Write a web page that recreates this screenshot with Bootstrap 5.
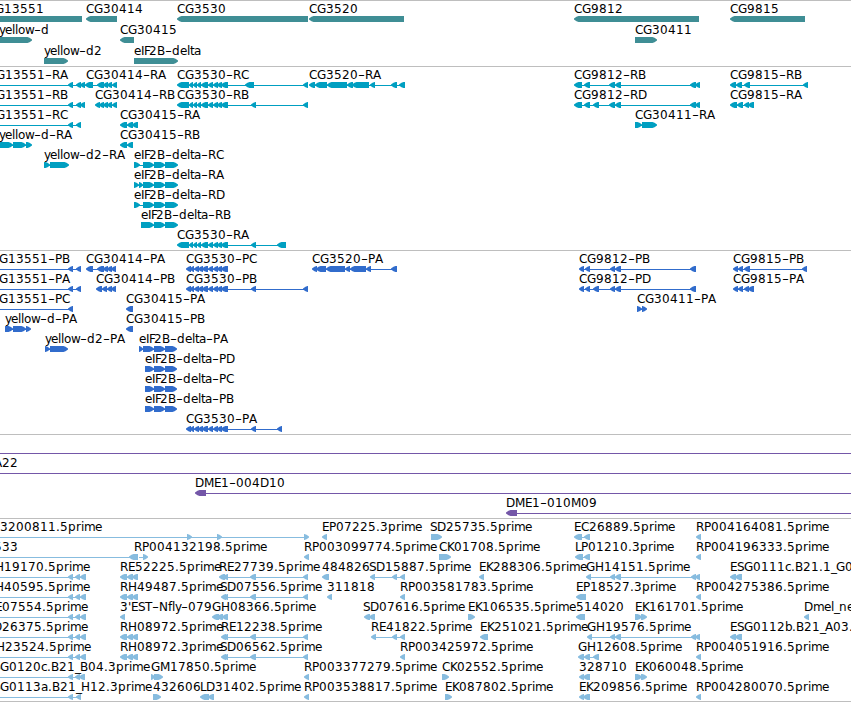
<!DOCTYPE html>
<html lang="en">
<head>
    <meta charset="UTF-8">
    <meta name="viewport" content="width=device-width, initial-scale=1.0">
    <title>Genome browser</title>
    <link href="https://cdn.jsdelivr.net/npm/bootstrap@5.3.0/dist/css/bootstrap.min.css" rel="stylesheet">
    <style>
        .browser {
            width: 851px;
            height: 702px;
            background-color: #fff;
        }

        .track {
            border-top: 1px solid #bebebe;
        }

        .track:last-child {
            border-bottom: 1px solid #bebebe;
        }

        .track text {
            font: 12px "DejaVu Sans", sans-serif;
            fill: #000;
        }

        .genes { color: #3f8e95; height: 66px; }
        .transcripts { color: #009fc1; height: 184px; }
        .proteins { color: #316ccc; height: 184px; }
        .clones { color: #7457a8; height: 84px; }
        .ests { color: #87bcdf; height: 184px; }
    </style>
</head>
<body>
    <main class="browser d-flex flex-column overflow-hidden">
        <section class="track genes flex-shrink-0" data-track="genes" data-pitch="21"></section>
        <section class="track transcripts flex-shrink-0" data-track="transcripts" data-pitch="20"></section>
        <section class="track proteins flex-shrink-0" data-track="proteins" data-pitch="20"></section>
        <section class="track clones flex-shrink-0" data-track="clones" data-pitch="20"></section>
        <section class="track ests flex-shrink-0" data-track="ests" data-pitch="20"></section>
    </main>

    <script src="https://cdn.jsdelivr.net/npm/bootstrap@5.3.0/dist/js/bootstrap.bundle.min.js"></script>
    <script>
        const cg3530 = '189:193 193:197 197:201 201:208 208:213 213:218 217:222 221:228';
        const cg3530p = '186:191 190:194 194:199 198:203 202:208 208:213 213:218 217:222 221:228';
        const eif = '143:154 154:165 165:178';
        const eifp = '145:154 154:165 165:177';

        // row, label, label x, strand, exons as "start:end"
        const tracks = {
            genes: [
                [0, 'CG13551', -13, '-', '-20:82'],
                [0, 'CG30414', 86, '-', '86:117'],
                [0, 'CG3530', 177, '-', '177:308'],
                [0, 'CG3520', 309, '-', '309:404'],
                [0, 'CG9812', 574, '-', '574:699'],
                [0, 'CG9815', 730, '-', '730:805'],
                [1, 'yellow-d', -1, '+', '-20:32'],
                [1, 'CG30415', 120, '-', '120:134'],
                [1, 'CG30411', 635, '+', '635:657'],
                [2, 'yellow-d2', 44, '+', '44:68'],
                [2, 'eIF2B-delta', 134, '+', '134:178']
            ],
            transcripts: [
                [0, 'CG13551-RA', -12, '-', '-20:-15 68:73 76:81 80:85 85:93'],
                [0, 'CG30414-RA', 86, '-', '86:93 97:104 103:108 107:112 112:117'],
                [0, 'CG3530-RC', 177, '-', '177:189 ' + cg3530 + ' 245:254 303:308'],
                [0, 'CG3520-RA', 309, '-', '309:315 315:327 327:347 347:353 352:369 370:375 391:397 399:405'],
                [0, 'CG9812-RB', 574, '-', '574:582 584:590 609:615 615:621 690:696 695:700'],
                [0, 'CG9815-RB', 730, '-', '730:736 736:742 744:750 803:808'],
                [1, 'CG13551-RB', -12, '-', '-20:-15 68:73 76:81 80:85'],
                [1, 'CG30414-RB', 95, '-', '95:100 99:104 103:108 107:112 112:117'],
                [1, 'CG3530-RB', 177, '-', '177:189 ' + cg3530 + ' 251:256 303:308'],
                [1, 'CG9812-RD', 574, '-', '574:582 584:590 593:599 609:615 615:621 690:696 695:700'],
                [1, 'CG9815-RA', 730, '-', '730:737 737:743 744:749 748:754'],
                [2, 'CG13551-RC', -12, '-', '-20:-15 68:73 76:81'],
                [2, 'CG30415-RA', 120, '-', '120:127 127:133 132:138'],
                [2, 'CG30411-RA', 635, '+', '635:642 642:657'],
                [3, 'yellow-d-RA', -1, '+', '-20:13 13:26 26:32'],
                [3, 'CG30415-RB', 120, '-', '120:127 127:133'],
                [4, 'yellow-d2-RA', 44, '+', '44:50 50:69'],
                [4, 'eIF2B-delta-RC', 134, '+', '134:140 ' + eif],
                [5, 'eIF2B-delta-RA', 134, '+', '134:139 139:143 ' + eif],
                [6, 'eIF2B-delta-RD', 134, '+', '134:140 ' + eif],
                [7, 'eIF2B-delta-RB', 141, '+', '141:154 154:165 165:178'],
                [8, 'CG3530-RA', 177, '-', '177:189 ' + cg3530 + ' 251:256 277:286']
            ],
            proteins: [
                [0, 'CG13551-PB', -9, '-', '-20:-15 68:73 76:81'],
                [0, 'CG30414-PA', 86, '-', '86:93 97:104 103:108 107:112 111:116'],
                [0, 'CG3530-PC', 186, '-', cg3530p],
                [0, 'CG3520-PA', 312, '-', '312:317 316:326 326:345 345:350 350:366 366:371 391:397'],
                [0, 'CG9812-PB', 579, '-', '579:584 585:590 610:615 615:621 690:696'],
                [0, 'CG9815-PB', 733, '-', '733:738 738:743 744:750 802:807'],
                [1, 'CG13551-PA', -9, '-', '-20:-15 68:73 76:81'],
                [1, 'CG30414-PB', 96, '-', '96:102 102:107 107:112 111:116'],
                [1, 'CG3530-PB', 186, '-', cg3530p + ' 251:256 303:308'],
                [1, 'CG9812-PD', 579, '-', '579:584 585:590 593:599 610:615 615:621 690:696'],
                [1, 'CG9815-PA', 733, '-', '733:738 738:743 744:749 748:754'],
                [2, 'CG13551-PC', -9, '-', '-20:-15 68:73'],
                [2, 'CG30415-PA', 126, '-', '126:133'],
                [2, 'CG30411-PA', 637, '+', '637:642 642:647'],
                [3, 'yellow-d-PA', 5, '+', '5:13 13:26 26:31'],
                [3, 'CG30415-PB', 126, '-', '126:133'],
                [4, 'yellow-d2-PA', 45, '+', '45:50 50:68'],
                [4, 'eIF2B-delta-PA', 139, '+', '139:143 143:154 154:165 165:177'],
                [5, 'eIF2B-delta-PD', 145, '+', eifp],
                [6, 'eIF2B-delta-PC', 145, '+', eifp],
                [7, 'eIF2B-delta-PB', 145, '+', eifp],
                [8, 'CG3530-PA', 186, '-', cg3530p + ' 251:256 277:282']
            ],
            clones: [
                [0, '', 0, '-', '-20:-15 870:880'],
                [1, 'A22', -6, '-', '-20:-15 870:880'],
                [2, 'DME1-004D10', 195, '-', '195:206 870:880'],
                [3, 'DME1-010M09', 506, '-', '506:517 870:880']
            ],
            ests: [
                [0, '3200811.5prime', 0, '+', '-20:-15 187:192 217:222 304:309'],
                [0, 'EP07225.3prime', 322, '-', '322:327'],
                [0, 'SD25735.5prime', 430, '+', '431:442'],
                [0, 'EC26889.5prime', 574, '-', '574:582 584:590'],
                [0, 'RP004164081.5prime', 696, '-', '696:701'],
                [1, '533', -6, '-', '-20:-15 129:138'],
                [1, 'RP004132198.5prime', 134, '+', '137:138 143:148'],
                [1, 'RP003099774.5prime', 304, '-', '304:309'],
                [1, 'CK01708.5prime', 439, '+', '439:451'],
                [1, 'LP01210.3prime', 575, '-', '575:583 584:590'],
                [1, 'RP004196333.5prime', 696, '-', '696:701'],
                [2, 'H19170.5prime', -5, '-', '-20:-15 68:73 75:80 80:86'],
                [2, 'RE52225.5prime', 120, '-', '120:127 127:133 132:138'],
                [2, 'RE27739.5prime', 219, '-', '219:225 223:228 250:256 303:308'],
                [2, '484826', 322, '-', '322:329'],
                [2, 'SD15887.5prime', 369, '-', '370:375 392:397 400:405'],
                [2, 'EK288306.5prime', 479, '-', '479:484'],
                [2, 'GH14151.5prime', 586, '-', '586:591 610:615 615:621 691:696 695:700'],
                [2, 'ESG0111c.B21.1_G05.5prime', 730, '-', '730:736 735:742'],
                [3, 'H40595.5prime', -5, '-', '-20:-15 68:73 75:80 80:86'],
                [3, 'RH49487.5prime', 120, '-', '120:127 127:133 132:138'],
                [3, 'SD07556.5prime', 220, '-', '221:226 223:228 250:256 303:308'],
                [3, '311818', 327, '-', '327:332'],
                [3, 'RP003581783.5prime', 400, '-', '400:405'],
                [3, 'EP18527.3prime', 576, '-', '576:586'],
                [3, 'RP004275386.5prime', 696, '-', '696:701'],
                [4, 'E07554.5prime', -5, '-', '-20:-15 68:73 75:80 80:86'],
                [4, "3'EST-Nfly-079", 120, '-', '120:125'],
                [4, 'GH08366.5prime', 212, '-', '212:219 217:223 222:228'],
                [4, 'SD07616.5prime', 363, '-', '364:370 369:375'],
                [4, 'EK106535.5prime', 468, '+', '468:475'],
                [4, '514020', 576, '-', '576:585'],
                [4, 'EK161701.5prime', 635, '+', '635:642 641:647'],
                [4, 'Dmel_neo', 804, '-', '804:809'],
                [5, 'D26375.5prime', -7, '-', '-20:-15 68:73 75:80 80:86'],
                [5, 'RH08972.5prime', 120, '-', '120:127 127:133 132:138'],
                [5, 'RE12238.5prime', 221, '-', '221:226 223:228 250:256 303:308'],
                [5, 'RE41822.5prime', 371, '-', '371:376 392:397 400:405'],
                [5, 'EK251021.5prime', 480, '-', '480:488'],
                [5, 'GH19576.5prime', 587, '-', '587:592 610:615 615:621 691:696 695:700'],
                [5, 'ESG0112b.B21_A03.5prime', 730, '-', '730:736 735:742'],
                [6, 'H23524.5prime', -4, '-', '-20:-15 68:73 75:80 80:86'],
                [6, 'RH08972.3prime', 120, '-', '120:127 127:133 132:138'],
                [6, 'SD06562.5prime', 220, '-', '221:226 223:228 250:256 303:308'],
                [6, 'RP003425972.5prime', 400, '-', '400:405'],
                [6, 'GH12608.5prime', 578, '-', '578:584 584:590 593:599'],
                [6, 'RP004051916.5prime', 696, '-', '696:701'],
                [7, 'ESG0120c.B21_B04.3prime', -14, '-', '-20:-15 68:73 75:80 79:85'],
                [7, 'GM17850.5prime', 151, '+', '151:155 154:163'],
                [7, 'RP003377279.5prime', 304, '-', '304:309'],
                [7, 'CK02552.5prime', 442, '+', '442:449'],
                [7, '328710', 579, '-', '579:584 583:590'],
                [7, 'EK060048.5prime', 635, '+', '635:642 641:647'],
                [8, 'ESG0113a.B21_H12.3prime', -14, '-', '-20:-15 68:73 76:81'],
                [8, '432606', 153, '+', '153:161'],
                [8, 'LD31402.5prime', 200, '-', '200:209 208:214'],
                [8, 'RP003538817.5prime', 304, '-', '304:309'],
                [8, 'EK087802.5prime', 445, '+', '445:452'],
                [8, 'EK209856.5prime', 579, '-', '579:584 583:590'],
                [8, 'RP004280070.5prime', 696, '-', '696:701']
            ]
        };

        // whole-pixel glyph advances of the label font
        const advances = {
            A: 8, B: 8, C: 8, D: 9, E: 7, F: 5, G: 9, H: 9, I: 3, K: 7, L: 6, M: 10, N: 9, P: 7, R: 8, S: 7, T: 7,
            a: 7, b: 7, c: 6, d: 8, e: 7, f: 4, i: 3, l: 3, m: 11, n: 8, o: 7, p: 8, r: 5, t: 4, w: 9, y: 6,
            '-': 7, '.': 4, '_': 5, "'": 3
        };
        const svgNS = 'http://www.w3.org/2000/svg';

        function add(parent, name, attrs) {
            const el = document.createElementNS(svgNS, name);
            Object.entries(attrs).forEach(([key, value]) => el.setAttribute(key, value));
            parent.appendChild(el);
            return el;
        }

        // box with a blunt arrowhead on the strand side
        function exonPoints(start, end, y, strand) {
            const head = Math.min(5, end - start);
            const dir = strand === '-' ? 1 : -1;
            const tip = strand === '-' ? start : end;
            const base = strand === '-' ? end : start;
            return [
                [tip, y - 0.5], [tip + dir * head * 0.5, y - 2.2], [tip + dir * head * 0.9, y - 3], [base, y - 3],
                [base, y + 3], [tip + dir * head * 0.9, y + 3], [tip + dir * head * 0.5, y + 2.2], [tip, y + 0.5]
            ].map(p => p.join(',')).join(' ');
        }

        function drawLabel(svg, label, x, y) {
            const text = add(svg, 'text', { y: y });
            // hyphens are stretched to the width of a dash
            label.split(/(-)/).filter(Boolean).forEach(part => {
                const xs = [];
                for (const ch of part) {
                    xs.push(x);
                    x += advances[ch] || 8;
                }
                const attrs = part === '-'
                    ? { x: xs[0], textLength: 7, lengthAdjust: 'spacingAndGlyphs' }
                    : { x: xs.join(' ') };
                add(text, 'tspan', attrs).textContent = part;
            });
        }

        document.querySelectorAll('.track').forEach(track => {
            const pitch = Number(track.dataset.pitch);
            const svg = add(track, 'svg', { width: 851, height: '100%', class: 'd-block', fill: 'currentColor' });
            const features = tracks[track.dataset.track];

            features.forEach(([row, label, x, strand, list]) => {
                const y = 18 + row * pitch;
                const exons = list.split(' ').map(e => e.split(':').map(Number));
                const first = exons[0][0] + 2;
                const last = exons[exons.length - 1][1] - 2;
                add(svg, 'rect', { x: first, y: y, width: last - first, height: 1 });
                exons.forEach(([start, end]) => {
                    add(svg, 'polygon', { points: exonPoints(start, end, y, strand) });
                });
            });
            features.forEach(([row, label, x]) => drawLabel(svg, label, x, 12 + row * pitch));
        });
    </script>
</body>
</html>
